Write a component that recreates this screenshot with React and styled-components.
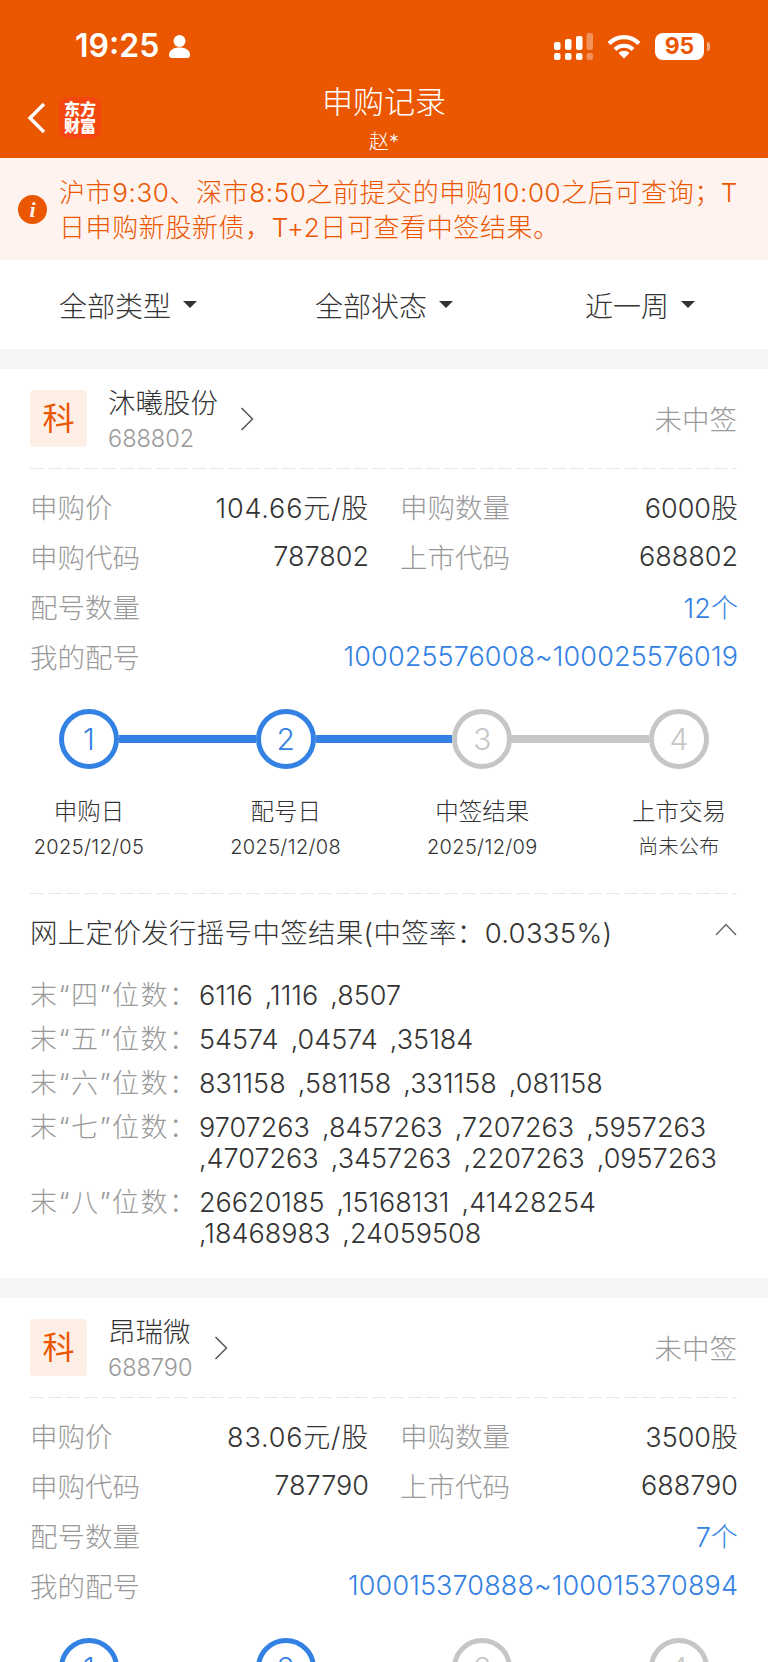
import React from 'react';
import styled, { createGlobalStyle } from 'styled-components';

const ORANGE = '#EB5600';
const BLUE = '#3381E3';
const GREY = '#C6C6C6';

const GlobalStyle = createGlobalStyle`
  html, body {
    margin: 0;
    padding: 0;
    background: #fff;
  }

  body {
    font-family: Inter, "Noto Sans CJK SC", sans-serif;
    color: #333;
  }
`;

const Page = styled.div`
  width: 768px;
  height: 1662px;
  overflow: hidden;
  background: #F5F6F8;
`;

const Top = styled.header`
  height: 158px;
  background: ${ORANGE};
  color: #fff;
`;

const StatusBar = styled.div`
  height: 86px;
  padding: 6px 64px 0 75px;
  box-sizing: border-box;
  display: flex;
  align-items: center;
`;

const Clock = styled.span`
  font-size: 32px;
  font-weight: 600;
  line-height: 36px;
`;

const PersonIconWrap = styled.span`
  display: flex;
  margin-left: 10px;
`;

const StatusIcons = styled.div`
  margin-left: auto;
  display: flex;
  align-items: center;
  gap: 14px;
`;

const Battery = styled.div`
  position: relative;
  width: 49px;
  height: 27px;
  border-radius: 8px;
  background: #fff;
  color: ${ORANGE};
  font-size: 23px;
  font-weight: 700;
  line-height: 27px;
  text-align: center;

  &::after {
    content: '';
    position: absolute;
    left: 52px;
    top: 9px;
    width: 3px;
    height: 9px;
    border-radius: 0 3px 3px 0;
    background: rgba(255, 255, 255, 0.5);
  }
`;

const NavBar = styled.div`
  height: 72px;
  display: grid;
  grid-template-columns: 1fr auto 1fr;
  align-items: start;
`;

const NavLeft = styled.div`
  display: flex;
  align-items: center;
  padding: 11px 0 0 27px;
  gap: 13px;
`;

const Logo = styled.div`
  width: 42px;
  height: 42px;
  border-radius: 8px;
  background: #F4470F;
  color: #fff;
  font-size: 16px;
  font-weight: 900;
  line-height: 17px;
  display: flex;
  flex-direction: column;
  align-items: center;
  justify-content: center;
`;

const NavTitle = styled.div`
  display: flex;
  flex-direction: column;
  align-items: center;
`;

const TitleText = styled.div`
  font-size: 31px;
  font-weight: 300;
  line-height: 36px;
  margin-top: -2px;
`;

const SubTitle = styled.div`
  font-size: 20px;
  font-weight: 300;
  line-height: 24px;
  margin-top: 10px;
`;

const Notice = styled.div`
  height: 102px;
  background: #FFF3EF;
  padding: 0 0 0 18px;
  box-sizing: border-box;
  display: flex;
  align-items: center;
  gap: 12px;
  color: ${ORANGE};
`;

const InfoDot = styled.div`
  flex: none;
  width: 29px;
  height: 29px;
  border-radius: 50%;
  background: ${ORANGE};
  color: #FFF3EF;
  font-family: "Liberation Serif", serif;
  font-size: 22px;
  font-style: italic;
  font-weight: 700;
  line-height: 29px;
  text-align: center;
`;

const NoticeText = styled.div`
  padding-top: 2px;
  font-size: 26px;
  font-weight: 300;
  line-height: 35px;
  letter-spacing: 0.6px;
  white-space: nowrap;
`;

const FilterBar = styled.div`
  height: 89px;
  background: #fff;
  display: grid;
  grid-template-columns: repeat(3, 1fr);
`;

const Filter = styled.div`
  display: flex;
  align-items: center;
  justify-content: center;
  gap: 12px;
  font-size: 28px;
  font-weight: 300;
`;

const Caret = styled.span`
  width: 0;
  height: 0;
  border-left: 7px solid transparent;
  border-right: 7px solid transparent;
  border-top: 7px solid #333;
`;

const Card = styled.section`
  margin-top: 20px;
  padding: 21px 31px 29px 30px;
  background: #fff;
`;

const CardHead = styled.div`
  display: flex;
  align-items: center;
  height: 57px;
`;

const Badge = styled.div`
  width: 57px;
  height: 57px;
  border-radius: 4px;
  background: #FDEEE6;
  color: ${ORANGE};
  font-size: 32px;
  font-weight: 400;
  line-height: 57px;
  text-align: center;
`;

const StockInfo = styled.div`
  margin-left: 21px;
  display: flex;
  flex-direction: column;
  align-items: flex-start;
`;

const StockName = styled.div`
  font-size: 27.5px;
  font-weight: 300;
  line-height: 36px;
  margin-top: 1px;
`;

const StockCode = styled.div`
  color: #999;
  font-size: 23.5px;
  font-weight: 300;
  line-height: 30px;
  margin-top: 3px;
`;

const HeadChevron = styled.svg`
  margin: 1px 0 0 22px;
`;

const HeadStatus = styled.div`
  margin-left: auto;
  color: #999;
  font-size: 27.5px;
  font-weight: 300;
  margin-top: -2px;
`;

const Dashed = styled.div`
  height: 1px;
  background: repeating-linear-gradient(to right, #E6E6E6 0 14px, transparent 14px 18px);
`;

const HeadDash = styled(Dashed)`
  margin-top: 21px;
`;

const Rows = styled.div`
  margin: 12px -2px 0 0;
  display: grid;
  grid-template-columns: 339px 338px;
  column-gap: 31px;
  grid-auto-rows: 50px;
`;

const Row = styled.div`
  grid-column: ${(p) => (p.$wide ? '1 / -1' : 'auto')};
  display: flex;
  align-items: center;
  justify-content: space-between;
  font-size: 27px;
  font-weight: 300;
  white-space: nowrap;
`;

const Label = styled.span`
  color: #999;
  font-size: 27.5px;
`;

const Value = styled.span`
  color: ${(p) => (p.$link ? BLUE : '#333')};
  letter-spacing: ${(p) => (p.$spaced ? '0.8px' : p.$link ? '0.12px' : '0')};
`;

const Track = styled.div`
  margin-top: 28px;
  padding: 0 28px 0 29px;
  display: flex;
  align-items: center;
`;

const Circle = styled.div`
  flex: none;
  width: 60px;
  height: 60px;
  box-sizing: border-box;
  border-radius: 50%;
  border: 5px solid ${(p) => (p.$on ? BLUE : GREY)};
  color: ${(p) => (p.$on ? BLUE : GREY)};
  font-size: 30px;
  font-weight: 300;
  line-height: 50px;
  text-align: center;
`;

const Line = styled.div`
  flex: 1;
  height: 8px;
  background: ${(p) => (p.$on ? BLUE : GREY)};
`;

const StepLabels = styled.div`
  margin: 28px -2px 0 -1px;
  display: flex;
  justify-content: space-between;
`;

const StepLabel = styled.div`
  width: 120px;
  display: flex;
  flex-direction: column;
  align-items: center;
  gap: 5px;
  white-space: nowrap;
`;

const StepName = styled.div`
  font-size: 23.5px;
  font-weight: 300;
  line-height: 30px;
`;

const StepDate = styled.div`
  font-size: 20px;
  font-weight: 300;
  line-height: 30px;
  letter-spacing: 0.35px;
`;

const StepDash = styled(Dashed)`
  margin-top: 31px;
`;

const ResultHead = styled.div`
  margin-top: 21px;
  height: 36px;
  display: flex;
  align-items: center;
  justify-content: space-between;
  font-size: 27.5px;
  font-weight: 300;
  line-height: 36px;
  letter-spacing: 0.3px;
`;

const ResultChevron = styled.svg`
  margin: -8px 0 0 0;
`;

const ResultList = styled.div`
  margin-top: 29px;
  display: flex;
  flex-direction: column;
  gap: 13px;
`;

const ResultRow = styled.div`
  display: flex;
  font-size: 27px;
  font-weight: 300;
  line-height: 31px;
`;

const ResultLabel = styled.span`
  flex: none;
  width: 169px;
  color: #999;
  letter-spacing: 1.5px;
  white-space: nowrap;
`;

const ResultValue = styled.span`
  max-width: 522px;
  word-spacing: 4.5px;
`;

const PersonIcon = () => (
  <svg width="21" height="23" viewBox="0 0 21 23" fill="#fff">
    <circle cx="10.5" cy="6" r="6" />
    <path d="M0 20c0-5 4.5-7.5 10.5-7.5S21 15 21 20c0 2-1 3-3 3H3c-2 0-3-1-3-3z" />
  </svg>
);

const SignalIcon = () => (
  <svg width="39" height="27" viewBox="0 0 39 27" fill="#fff">
    <rect x="0" y="20" width="6.5" height="7" rx="2" />
    <rect x="11" y="20" width="6.5" height="7" rx="2" />
    <rect x="22" y="20" width="6.5" height="7" rx="2" />
    <rect x="32.5" y="20" width="6.5" height="7" rx="2" opacity="0.35" />
    <rect x="0" y="9" width="6.5" height="8" rx="2" />
    <rect x="11" y="6" width="6.5" height="11" rx="2" />
    <rect x="22" y="3" width="6.5" height="14" rx="2" />
    <rect x="32.5" y="0" width="6.5" height="17" rx="2" opacity="0.35" />
  </svg>
);

const WifiIcon = () => (
  <svg width="34" height="25" viewBox="0 0 34 25" fill="none" stroke="#fff" strokeWidth="4.2">
    <path d="M2 9.5C10.5 1 23.5 1 32 9.5" />
    <path d="M8 15.5c5-5 13-5 18 0" />
    <path d="M17 24.5l-5.5-5.5c3-3 8-3 11 0z" fill="#fff" stroke="none" />
  </svg>
);

const BackIcon = () => (
  <svg width="19" height="32" viewBox="0 0 19 32" fill="none" stroke="#fff" strokeWidth="3.4">
    <path d="M17 2L3 16l14 14" />
  </svg>
);

const RESULTS = [
  ['末“四”位数：', '6116 ,1116 ,8507'],
  ['末“五”位数：', '54574 ,04574 ,35184'],
  ['末“六”位数：', '831158 ,581158 ,331158 ,081158'],
  ['末“七”位数：', '9707263 ,8457263 ,7207263 ,5957263 ,4707263 ,3457263 ,2207263 ,0957263'],
  ['末“八”位数：', '26620185 ,15168131 ,41428254 ,18468983 ,24059508'],
];

const STOCKS = [
  {
    name: '沐曦股份',
    code: '688802',
    price: '104.66元/股',
    amount: '6000股',
    buyCode: '787802',
    count: '12个',
    range: '100025576008~100025576019',
    results: RESULTS,
  },
  {
    name: '昂瑞微',
    code: '688790',
    price: '83.06元/股',
    amount: '3500股',
    buyCode: '787790',
    count: '7个',
    range: '100015370888~100015370894',
  },
];

const STEPS = [
  ['申购日', '2025/12/05'],
  ['配号日', '2025/12/08'],
  ['中签结果', '2025/12/09'],
  ['上市交易', '尚未公布'],
];

const StockCard = ({ stock }) => (
  <Card>
    <CardHead>
      <Badge>科</Badge>
      <StockInfo>
        <StockName>{stock.name}</StockName>
        <StockCode>{stock.code}</StockCode>
      </StockInfo>
      <HeadChevron width="14" height="24" viewBox="0 0 14 24" fill="none" stroke="#555" strokeWidth="1.5">
        <path d="M1.5 1L12.5 12 1.5 23" />
      </HeadChevron>
      <HeadStatus>未中签</HeadStatus>
    </CardHead>
    <HeadDash />
    <Rows>
      <Row><Label>申购价</Label><Value $spaced>{stock.price}</Value></Row>
      <Row><Label>申购数量</Label><Value>{stock.amount}</Value></Row>
      <Row><Label>申购代码</Label><Value>{stock.buyCode}</Value></Row>
      <Row><Label>上市代码</Label><Value>{stock.code}</Value></Row>
      <Row $wide><Label>配号数量</Label><Value $link>{stock.count}</Value></Row>
      <Row $wide><Label>我的配号</Label><Value $link>{stock.range}</Value></Row>
    </Rows>
    <Track>
      {STEPS.map((step, i) => (
        <React.Fragment key={step[0]}>
          {i > 0 && <Line $on={i < 3} />}
          <Circle $on={i < 2}>{i + 1}</Circle>
        </React.Fragment>
      ))}
    </Track>
    <StepLabels>
      {STEPS.map(([name, date]) => (
        <StepLabel key={name}>
          <StepName>{name}</StepName>
          <StepDate>{date}</StepDate>
        </StepLabel>
      ))}
    </StepLabels>
    <StepDash />
    {stock.results && (
      <>
        <ResultHead>
          <span>网上定价发行摇号中签结果(中签率：0.0335%)</span>
          <ResultChevron width="22" height="13" viewBox="0 0 22 13" fill="none" stroke="#666" strokeWidth="1.4">
            <path d="M1 12L11 1.5 21 12" />
          </ResultChevron>
        </ResultHead>
        <ResultList>
          {stock.results.map(([label, value]) => (
            <ResultRow key={label}>
              <ResultLabel>{label}</ResultLabel>
              <ResultValue>{value}</ResultValue>
            </ResultRow>
          ))}
        </ResultList>
      </>
    )}
  </Card>
);

export default function App() {
  return (
    <Page>
      <GlobalStyle />
      <Top>
        <StatusBar>
          <Clock>19:25</Clock>
          <PersonIconWrap><PersonIcon /></PersonIconWrap>
          <StatusIcons>
            <SignalIcon />
            <WifiIcon />
            <Battery>95</Battery>
          </StatusIcons>
        </StatusBar>
        <NavBar>
          <NavLeft>
            <BackIcon />
            <Logo>
              <span>东方</span>
              <span>财富</span>
            </Logo>
          </NavLeft>
          <NavTitle>
            <TitleText>申购记录</TitleText>
            <SubTitle>赵*</SubTitle>
          </NavTitle>
        </NavBar>
      </Top>
      <Notice>
        <InfoDot>i</InfoDot>
        <NoticeText>
          沪市9:30、深市8:50之前提交的申购10:00之后可查询；T
          <br />
          日申购新股新债，T+2日可查看中签结果。
        </NoticeText>
      </Notice>
      <FilterBar>
        <Filter>全部类型<Caret /></Filter>
        <Filter>全部状态<Caret /></Filter>
        <Filter>近一周<Caret /></Filter>
      </FilterBar>
      {STOCKS.map((stock) => <StockCard key={stock.code} stock={stock} />)}
    </Page>
  );
}
